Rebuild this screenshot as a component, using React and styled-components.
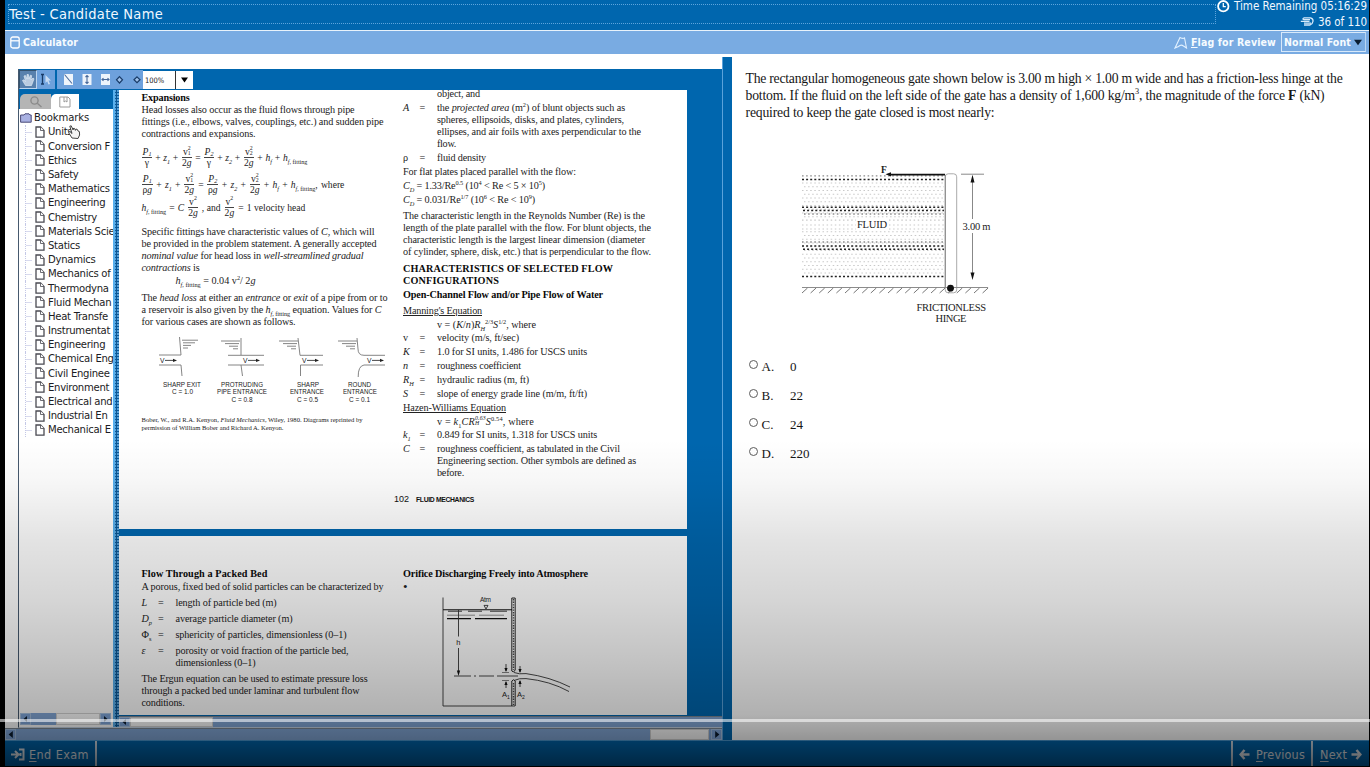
import React, { useLayoutEffect, useRef, useState } from "react";
import styled, { createGlobalStyle, css } from "styled-components";

const UI = `"DejaVu Sans Condensed", "DejaVu Sans", "Noto Sans", sans-serif`;
const SERIF = `"Liberation Serif", serif`;
const BLUE = "#0066ae";

const Global = createGlobalStyle`
  html, body { margin: 0; padding: 0; background: #000; overflow: hidden; }
  * { box-sizing: border-box; }
`;

/* Tracks its text so that it fills a set measure */
const FitSpan = styled.span`
  display: inline-block;
  white-space: nowrap;
  text-decoration: inherit;
  sub, sup { font-size: 0.62em; line-height: 0; }
`;
function Fit({ w, children }) {
  const ref = useRef(null);
  const [ls, setLs] = useState(0);
  useLayoutEffect(() => {
    const el = ref.current;
    const n = el.textContent.length;
    if (w && n) setLs((w - el.getBoundingClientRect().width) / n);
  }, [w]);
  return (
    <FitSpan ref={ref} style={{ letterSpacing: `${ls}px` }}>
      {children}
    </FitSpan>
  );
}

const Screen = styled.div`
  position: relative;
  width: 1370px;
  height: 767px;
  padding: 0 1px 1px 5px;
  background: #000;
  display: flex;
  flex-direction: column;
  overflow: hidden;
  font-family: ${UI};
`;
const Header = styled.header`
  height: 31px;
  flex: none;
  background: ${BLUE};
  border-bottom: 1px solid #e8f2fb;
  display: flex;
  color: #f1f8ff;
`;
const Title = styled.div`
  margin: 4px 0 0 3px;
  width: 1208px;
  height: 20px;
  border: 1px dotted #5da4dc;
  font-size: 14.5px;
  line-height: 19px;
`;
const Status = styled.div`
  flex: 1;
  padding-right: 2px;
  display: flex;
  flex-direction: column;
  align-items: flex-end;
  font-size: 11.5px;
`;
const StatusRow = styled.div`
  height: 15px;
  line-height: 14px;
  margin-top: ${(p) => (p.$first ? "-1px" : "1px")};
  display: flex;
  gap: 4px;
`;
const ToolStrip = styled.div`
  height: 23px;
  flex: none;
  background: #79abe2;
  display: flex;
  align-items: center;
  color: #f6fbff;
  font-size: 10.5px;
  font-weight: bold;
  padding: 0 3px 1px 5px;
`;
const Tool = styled.div`
  display: flex;
  align-items: center;
  gap: 3px;
  u { text-underline-offset: 1px; }
`;
const Spacer = styled.div`
  flex: 1;
`;
const FontSelect = styled.div`
  margin-left: 5px;
  height: 20px;
  width: 85px;
  border: 1px solid #d8e9fa;
  border-right-color: #b7d4f2;
  display: flex;
  align-items: center;
  justify-content: space-between;
  padding: 0 3px 0 2px;
`;
const Main = styled.main`
  flex: 1;
  min-height: 0;
  display: flex;
  background: #fff;
`;
const LeftPane = styled.section`
  width: 717px;
  display: flex;
  flex-direction: column;
`;
const Divider = styled.div`
  width: 10px;
  margin-top: 3px;
  background: ${BLUE};
  border-left: 1px solid #5aa2da;
`;
const Viewer = styled.div`
  margin: 15px 0 0 13px;
  height: 659px;
  border-left: 1px solid #46596e;
  border-bottom: 1px solid #c9d8e8;
  background: ${BLUE};
  display: flex;
  flex-direction: column;
`;
const ViewerBar = styled.div`
  height: 21px;
  flex: none;
  display: flex;
  align-items: center;
`;
const BarGroup = styled.div`
  height: 19px;
  width: ${(p) => p.$w}px;
  margin-right: 2px;
  background: #6ea1dc;
  display: flex;
  svg { display: block; }
`;
const BarButton = styled.div`
  width: 18px;
  height: 19px;
  background: ${(p) => (p.$on ? "#5981ad" : "transparent")};
  border: 1px solid ${(p) => (p.$on ? "#bcd4ee" : "transparent")};
  border-top-color: ${(p) => (p.$on ? "#35536f" : "transparent")};
  border-left-color: ${(p) => (p.$on ? "#35536f" : "transparent")};
`;
const ZoomBox = styled.div`
  width: 33px;
  height: 18px;
  background: #fff;
  border-right: 1px solid #333;
  font-size: 7.5px;
  line-height: 19px;
  padding-left: 2px;
  margin-left: -2px;
  color: #222;
`;
const ZoomDrop = styled.div`
  width: 17px;
  height: 18px;
  background: #fff;
  display: flex;
  align-items: center;
  justify-content: center;
`;
const ViewerBody = styled.div`
  flex: 1;
  min-height: 0;
  display: flex;
`;
const Sidebar = styled.aside`
  width: 94px;
  display: flex;
  flex-direction: column;
`;
const Tabs = styled.div`
  height: 19px;
  padding: 4px 0 0 1px;
  display: flex;
`;
const Tab = styled.div`
  width: ${(p) => (p.$on ? 28 : 31)}px;
  height: 15px;
  background: ${(p) => (p.$on ? "#fff" : "#b5b5b5")};
  border-radius: 5px 0 0 0;
  display: flex;
  align-items: center;
  justify-content: center;
`;
const Tree = styled.div`
  position: relative;
  flex: 1;
  min-height: 0;
  background: #fff;
  padding: 1.7px 0 0 1px;
  overflow: hidden;
  color: #1c1c24;
`;
const TreeRow = styled.div`
  display: flex;
  align-items: center;
  height: 14.2px;
  font-size: 11.2px;
  letter-spacing: -0.28px;
  white-space: nowrap;
  gap: ${(p) => (p.$root ? 2 : 3)}px;
  padding-left: ${(p) => (p.$root ? 0 : 5)}px;
  svg { flex: none; }
`;
const Branch = styled.i`
  width: 7px;
  height: 14.2px;
  flex: none;
  border-left: 1px dotted #c4c8e6;
  background: linear-gradient(#d8daee, #d8daee) 0 7px / 7px 1px no-repeat;
`;
const Cursor = styled.svg`
  position: absolute;
  left: 48px;
  top: 14px;
`;
const Scroll = styled.div`
  height: ${(p) => p.$h}px;
  flex: none;
  background: #86a9d6;
  border-top: 1px solid #7d8894;
  display: flex;
  ${(p) =>
    p.$inset &&
    css`
      background: #fff;
      border-top: none;
      padding: 0 2px 2px 1px;
    `}
`;
const Track = styled.div`
  flex: 1;
  background: #83a8d8;
  display: flex;
`;
const Gap = styled.div`
  width: ${(p) => p.$w}px;
`;
const Thumb = styled.div`
  width: ${(p) => p.$w}px;
  height: 100%;
  background: #fff;
  border: 1px solid #d4d4d4;
`;
const Arrow = styled.div`
  width: 11px;
  height: 100%;
  background: #7fa6da;
  border: 1px solid #a9c4e4;
  display: flex;
  align-items: center;
  justify-content: center;
`;
const Splitter = styled.div`
  width: 6px;
  background: radial-gradient(circle at 1px 1px, #5aa4dc 0.7px, transparent 0.9px) 2px 0 / 3px 3px, #0a5796;
  border-left: 2px solid #58b0ee;
`;
const DocColumn = styled.div`
  flex: 1;
  min-width: 0;
  display: flex;
  flex-direction: column;
`;
const Pages = styled.div`
  flex: 1;
  min-height: 0;
  display: flex;
  flex-direction: column;
  gap: 7px;
  overflow: hidden;
  padding-bottom: 1px;
`;
const Page = styled.article`
  width: 568px;
  height: ${(p) => p.$h}px;
  flex: none;
  background: #fff;
  padding-left: 22.5px;
  overflow: hidden;
  display: grid;
  grid-template-columns: 261.5px 280px;
  align-content: start;
  font-family: ${SERIF};
  font-size: 10.2px;
  color: #222;
`;
const Column = styled.div`
  padding-top: ${(p) => p.$top}px;
  display: flow-root;
`;
/* pitch: distance from the middle of the previous line to the middle of this one */
const LineBox = styled.div`
  height: 12px;
  line-height: 12px;
  margin-top: ${(p) => p.$pitch - 12}px;
  padding-left: ${(p) => p.$indent || 0}px;
  white-space: nowrap;
  font-weight: ${(p) => (p.$bold ? "bold" : "normal")};
  color: ${(p) => (p.$bold ? "#0a0a0a" : "inherit")};
  font-size: ${(p) => (p.$size ? p.$size + "px" : "inherit")};
  text-decoration: ${(p) => (p.$under ? "underline" : "none")};
`;
const Line = ({ w, pitch = 12, indent, bold, size, under, children }) => (
  <LineBox $pitch={pitch} $indent={indent} $bold={bold} $size={size} $under={under}>
    <Fit w={w}>{children}</Fit>
  </LineBox>
);
const DefRow = styled.div`
  height: 12px;
  line-height: 12px;
  margin-top: ${(p) => p.$pitch - 12}px;
  display: grid;
  grid-template-columns: 16.5px 17.5px auto;
  white-space: nowrap;
  & > span:first-child { font-style: ${(p) => (p.$roman ? "normal" : "italic")}; }
  sub { font-size: 0.62em; line-height: 0; }
`;
const Def = ({ s, w, pitch = 14, roman, children }) => (
  <DefRow $pitch={pitch} $roman={roman}>
    <span>{s}</span>
    <span>=</span>
    <span>
      <Fit w={w}>{children}</Fit>
    </span>
  </DefRow>
);
const Equation = styled.div`
  height: ${(p) => p.$h}px;
  width: ${(p) => p.$w}px;
  display: flex;
  align-items: center;
  justify-content: space-between;
  white-space: nowrap;
  font-size: 9.6px;
  line-height: 11px;
  sub { font-size: 0.64em; line-height: 0; }
`;
const FracBox = styled.span`
  display: inline-flex;
  flex-direction: column;
  align-items: center;
  & > span { line-height: 10px; padding: 0 1px; }
  & > span:first-child { border-bottom: 1px solid #444; }
  sub { vertical-align: -0.5px; }
`;
const Stack = styled.span`
  display: inline-flex;
  flex-direction: column;
  vertical-align: middle;
  font-size: 5.8px;
  line-height: 5px;
  margin-top: -2px;
  & > span { min-height: 5px; }
`;
const Frac = ({ a, b }) => (
  <FracBox>
    <span>{a}</span>
    <span>{b}</span>
  </FracBox>
);
const Drawing = styled.svg`
  display: block;
  overflow: visible;
  margin: ${(p) => p.$m || 0};
`;
const PageFoot = styled.div`
  margin: 14px 0 0 -9px;
  height: 12px;
  line-height: 12px;
  display: flex;
  gap: 7px;
  align-items: baseline;
  font-family: "Liberation Sans", sans-serif;
  font-size: 9px;
  color: #111;
  b { font-size: 6.8px; }
`;
const Question = styled.section`
  flex: 1;
  padding: 16px 0 0 13.5px;
  font-family: ${SERIF};
  font-size: 13.7px;
  color: #161616;
`;
const Sentence = styled.p`
  margin: 0;
  height: 17.2px;
  line-height: 17px;
  white-space: nowrap;
  sup { font-size: 0.6em; line-height: 0; }
`;
const Options = styled.div`
  margin: 23px 0 0 3.5px;
`;
const Option = styled.label`
  display: grid;
  grid-template-columns: 12.5px 28.5px auto;
  height: 29px;
  line-height: 28px;
  font-size: 13px;
`;
const Radio = styled.i`
  width: 9px;
  height: 9px;
  margin-top: 7px;
  border-radius: 50%;
  border: 1.4px solid #5c5c5c;
`;
const Footer = styled.footer`
  height: 26px;
  flex: none;
  background: ${BLUE};
  border-top: 1px solid #4b9bd4;
  display: flex;
  color: #fff;
  font-size: 12.5px;
`;
const FootButton = styled.div`
  width: ${(p) => p.$w}px;
  display: flex;
  align-items: center;
  justify-content: center;
  gap: ${(p) => p.$gap || 4}px;
  padding-top: 1px;
  color: #e9eef3;
  ${(p) => (p.$edge === "right" ? "border-right" : "border-left")}: 2px solid #cfdbe6;
  u { text-underline-offset: 2px; text-decoration-thickness: 1px; }
`;
const Shade = styled.div`
  position: absolute;
  left: 0;
  right: 0;
  top: 440px;
  bottom: 0;
  pointer-events: none;
  background: linear-gradient(
    rgba(0, 0, 0, 0) 0,
    rgba(0, 0, 0, 0.03) 40px,
    rgba(0, 0, 0, 0.11) 100px,
    rgba(0, 0, 0, 0.165) 160px,
    rgba(0, 0, 0, 0.235) 220px,
    rgba(0, 0, 0, 0.31) 275px,
    rgba(0, 0, 0, 0.42) 300px,
    rgba(0, 0, 0, 0.62) 327px
  );
`;
const Progress = styled.div`
  position: absolute;
  left: 0;
  right: 0;
  top: 719px;
  height: 3px;
  background: rgba(255, 255, 255, 0.56);
`;

const Tri = ({ dir, s = 5, c = "#0a1c30" }) => (
  <svg width={s} height={s + 1} viewBox="0 0 10 10" preserveAspectRatio="none">
    <path d={{ left: "M8 0L1 5L8 10Z", right: "M2 0L9 5L2 10Z", down: "M0 2L10 2L5 8Z" }[dir]} fill={c} />
  </svg>
);

const SECTIONS = [
  "Units", "Conversion F", "Ethics", "Safety", "Mathematics", "Engineering", "Chemistry",
  "Materials Scie", "Statics", "Dynamics", "Mechanics of", "Thermodyna", "Fluid Mechan",
  "Heat Transfe", "Instrumentat", "Engineering", "Chemical Eng", "Civil Enginee",
  "Environment", "Electrical and", "Industrial En", "Mechanical E",
];

const Doc = () => (
  <svg width="10" height="12" viewBox="0 0 10 12" fill="#fff" stroke="#4a4a52" strokeWidth="1.3">
    <path d="M1 1H5.5L9 4.5V11.2H1Z" />
    <path d="M5.5 1V4.5H9" strokeWidth=".8" />
  </svg>
);

function Entrances() {
  const T = ({ x, y, w, children }) => (
    <text x={x} y={y} textLength={w} lengthAdjust="spacingAndGlyphs" stroke="none" fill="#222">
      {children}
    </text>
  );
  const flow = (x) => (
    <g stroke="#333">
      <T x={x} y={362.6} w={4.5}>V</T>
      <path d={`M${x + 5} 360.4H${x + 13}`} />
      <path d={`M${x + 13} 358.8L${x + 17} 360.4L${x + 13} 362Z`} fill="#222" stroke="none" />
    </g>
  );
  const level = (x) => <path d={`M${x} 341h19M${x + 4} 343.6h14M${x + 8} 346.2h9M${x + 12} 348.8h5`} />;
  return (
    <Drawing width="246" height="74" viewBox="142 332 246 74" $m="4px 0 0" fill="none" stroke="#777" strokeWidth=".9"
      fontFamily="Liberation Sans, sans-serif" fontSize="6.8">
      <path d="M179.5 337L181 355H159M159 365H181L182 376M182 340.2h16M183 342.8h12M183 345.4h8M183 348h5" />
      {flow(160)}
      <path d="M241 338V355M228 355.3H264M228 365H264M241 365L242.5 376" />
      {level(221)}{flow(243)}
      <path d="M298 338L300 355.3H323M323 365H300.5V376" />
      {level(279)}{flow(302)}
      <path d="M357 338L358 349Q358 355.3 364 355.3H385M385 365H364Q358 366 358.2 377" />
      {level(338)}{flow(367)}
      <T x={163} y={386.6} w={38}>SHARP EXIT</T>
      <T x={172} y={394.4} w={21}>C = 1.0</T>
      <T x={221} y={386.6} w={42}>PROTRUDING</T>
      <T x={217} y={394.4} w={50}>PIPE ENTRANCE</T>
      <T x={231.5} y={402.2} w={21}>C = 0.8</T>
      <T x={297} y={386.6} w={22}>SHARP</T>
      <T x={290} y={394.4} w={34}>ENTRANCE</T>
      <T x={297} y={402.2} w={21}>C = 0.5</T>
      <T x={348} y={386.6} w={23}>ROUND</T>
      <T x={343} y={394.4} w={34}>ENTRANCE</T>
      <T x={349} y={402.2} w={21}>C = 0.1</T>
    </Drawing>
  );
}

function Orifice() {
  return (
    <Drawing width="130" height="112" viewBox="442 596 130 112" $m="3px 0 0 39px" fill="none" stroke="#333" strokeWidth=".9"
      fontFamily="Liberation Sans, sans-serif" fontSize="7.5">
      <path d="M443 597.5V706H515" />
      <path d="M443 609.8H512" stroke="#111" strokeWidth="1.1" />
      <path d="M448 611.2h14M468 611.2h14M490 611.2h17" stroke="#222" />
      <path d="M447 615.2h28M479 615.2h25" stroke="#888" />
      <path d="M447 618.6h24M475 618.6h32" stroke="#111" strokeWidth="1.1" />
      <path d="M511.8 706V681Q513.5 678.5 515.2 681V706M511.8 598H515.2V670Q513.5 673.5 511.8 671Z" stroke="#111" />
      <path d="M513.5 599V670M513.5 683V705" stroke="#444" strokeWidth="1.4" strokeDasharray="1.4 1.2" />
      <path d="M484 605.4H488L486 609Z" />
      <path d="M458.5 610V636.5M458.5 648V671" />
      <path d="M456.9 670.5H460.1L458.5 676Z" fill="#111" stroke="none" />
      <path d="M454 676H471M474 676H476M479 676H494M497 676H518" />
      <path d="M502 672.5h7M502 680.5h7" stroke="#777" />
      <path d="M506 664v7M520 666v6M506 682v6M520 681v6" />
      <path d="M504.4 668h3.2l-1.6 4zM518.4 669h3.2l-1.6 4zM504.4 685h3.2l-1.6-4zM518.4 684h3.2l-1.6-4z" fill="#111" stroke="none" />
      <path d="M514 672.5Q519 674.5 526 673.6Q550 677 570 687M514 680.5Q519 678 526 678.6Q550 681 569 691.5" />
      <g fill="#222" stroke="none">
        <text x="480" y="601.5" textLength="11" fontSize="6.5">Atm</text>
        <text x="456.3" y="645.3">h</text>
        <text x="502" y="697">A<tspan fontSize="5" dy="1.5">1</tspan></text>
        <text x="517" y="697">A<tspan fontSize="5" dy="1.5">2</tspan></text>
      </g>
    </Drawing>
  );
}

function Gate() {
  const faint = [];
  for (let y = 183; y < 275; y += 3.75) if (Math.abs(y - 224) > 5) faint.push(y);
  const hatch = Array.from({ length: 22 }, (_, i) => 802 + i * 8.6).filter((x) => x < 984);
  return (
    <Drawing width="190" height="170" viewBox="801 160 190 170" $m="38.4px 0 0 55.5px" fill="none" fontFamily="Liberation Serif, serif" fontSize="10.5">
      {faint.map((y, i) => (
        <path key={y} d={`M${802 + (i % 2) * 2} ${y}H944`} stroke="#c9c9c9" strokeWidth="1.2" strokeDasharray="1.5 2.6" />
      ))}
      <path d="M802 220.2H856M889 220.2H944M802 225H856M889 225H944M802 229H856M889 229H944" stroke="#c9c9c9" strokeWidth="1.2" strokeDasharray="1.5 2.6" />
      <path d="M802 175.8H944M804 214H944M802 242H944" stroke="#8a8a8a" strokeWidth="1.3" strokeDasharray="1.6 2.5" />
      <path d="M802 179.6H944M802 207.3H944M803 210.6H944M802 246H944M803 249.2H944M802 276.6H944" stroke="#222" strokeWidth="1.5" strokeDasharray="2 2.1" />
      <rect x="945.2" y="173.8" width="11.5" height="119" rx="3" fill="#fff" stroke="#aaa" strokeWidth="1" />
      <path d="M945.3 175V287" stroke="#888" />
      <path d="M889 174.6H945" stroke="#111" strokeWidth="1.8" />
      <path d="M885.5 174.3L891 172.3V176.5Z" fill="#111" />
      <path d="M802 287.5H988" stroke="#8c8c8c" />
      {hatch.map((x) => (
        <path key={x} d={`M${x} 293L${x + 5.5} 288`} stroke="#777" />
      ))}
      <circle cx="950.5" cy="288.2" r="3.4" fill="#111" />
      <path d="M961 174.2H984M972.5 179V219M972.5 233V275" stroke="#888" />
      <path d="M970.5 182.5L972.5 174.8L974.5 182.5ZM970.5 272.5L972.5 280L974.5 272.5Z" fill="#111" />
      <g fill="#222">
        <text x="881" y="172.8" fontWeight="bold" fontSize="9.5">F</text>
        <text x="857" y="228.3" textLength="30">FLUID</text>
        <text x="962.5" y="229.5" textLength="28">3.00 m</text>
        <text x="916.5" y="310.8" textLength="69.5">FRICTIONLESS</text>
        <text x="935.5" y="322.3" textLength="31">HINGE</text>
      </g>
    </Drawing>
  );
}

const v2g = (n) => (
  <Frac a={<>v<Stack><span>2</span><span>{n}</span></Stack></>} b={<>2<i>g</i></>} />
);
const Bernoulli = ({ w, h, under, tail }) => (
  <Equation $w={w} $h={h}>
    <Frac a={<i>P<sub>1</sub></i>} b={under} />
    <span>+</span><i>z<sub>1</sub></i><span>+</span>{v2g(1)}<span>=</span>
    <Frac a={<i>P<sub>2</sub></i>} b={under} />
    <span>+</span><i>z<sub>2</sub></i><span>+</span>{v2g(2)}<span>+</span>
    <i>h<sub>f</sub></i><span>+</span>{tail}
  </Equation>
);
const hfit = <><i>h<sub>f, </sub></i><sub>fitting</sub></>;

function PageOne() {
  return (
    <Page $h={439}>
      <Column $top={2}>
        <Line bold w={48}>Expansions</Line>
        <Line w={213}>Head losses also occur as the fluid flows through pipe</Line>
        <Line w={242}>fittings (i.e., elbows, valves, couplings, etc.) and sudden pipe</Line>
        <Line w={114}>contractions and expansions.</Line>
        <Bernoulli w={166} h={34} under="γ" tail={<span>{hfit}</span>} />
        <Bernoulli w={203} h={20} under={<>ρ<i>g</i></>} tail={<><span>{hfit},</span><span>where</span></>} />
        <Equation $w={164} $h={26}>
          <span>{hfit}</span><span>=</span><i>C</i>{v2g("")}<span>, and</span>{v2g("")}<span>=</span><span>1 velocity head</span>
        </Equation>
        <Line w={233} pitch={18}>Specific fittings have characteristic values of <i>C</i>, which will</Line>
        <Line w={235}>be provided in the problem statement. A generally accepted</Line>
        <Line w={222}><i>nominal value</i> for head loss in <i>well-streamlined gradual</i></Line>
        <Line w={58}><i>contractions</i> is</Line>
        <Line w={80} pitch={13} indent={34}>{hfit} = 0.04 v<sup>2</sup>/ 2<i>g</i></Line>
        <Line w={246} pitch={17}>The <i>head loss</i> at either an <i>entrance</i> or <i>exit</i> of a pipe from or to</Line>
        <Line w={240}>a reservoir is also given by the {hfit} equation. Values for <i>C</i></Line>
        <Line w={154}>for various cases are shown as follows.</Line>
        <Entrances />
        <Line w={221} size={6.6} pitch={20}>Bober, W., and R.A. Kenyon, <i>Fluid Mechanics</i>, Wiley, 1980. Diagrams reprinted by</Line>
        <Line w={142} size={6.6} pitch={8}>permission of William Bober and Richard A. Kenyon.</Line>
      </Column>
      <Column $top={-2}>
        <Line w={43} indent={34} pitch={10}>object, and</Line>
        <Def s="A" w={188}>the <i>projected area</i> (m<sup>2</sup>) of blunt objects such as</Def>
        <Line w={187} indent={34}>spheres, ellipsoids, disks, and plates, cylinders,</Line>
        <Line w={204} indent={34}>ellipses, and air foils with axes perpendicular to the</Line>
        <Line w={19} indent={34}>flow.</Line>
        <Def s="ρ" w={49} roman>fluid density</Def>
        <Line w={173} pitch={14}>For flat plates placed parallel with the flow:</Line>
        <Line w={142} pitch={14}><i>C<sub>D</sub></i> = 1.33/Re<sup>0.5</sup> (10<sup>4</sup> &lt; Re &lt; 5 × 10<sup>5</sup>)</Line>
        <Line w={132} pitch={14}><i>C<sub>D</sub></i> = 0.031/Re<sup>1/7</sup> (10<sup>6</sup> &lt; Re &lt; 10<sup>9</sup>)</Line>
        <Line w={242} pitch={16}>The characteristic length in the Reynolds Number (Re) is the</Line>
        <Line w={248}>length of the plate parallel with the flow. For blunt objects, the</Line>
        <Line w={242}>characteristic length is the largest linear dimension (diameter</Line>
        <Line w={248}>of cylinder, sphere, disk, etc.) that is perpendicular to the flow.</Line>
        <Line bold w={210} pitch={16.5}>CHARACTERISTICS OF SELECTED FLOW</Line>
        <Line bold w={96} pitch={12.5}>CONFIGURATIONS</Line>
        <Line bold w={200} pitch={14}>Open-Channel Flow and/or Pipe Flow of Water</Line>
        <Line under w={79} pitch={16}>Manning's Equation</Line>
        <Line w={99} indent={34} pitch={13.5}>v = (<i>K</i>/<i>n</i>)<i>R<sub>H</sub></i><sup>2/3</sup><i>S</i><sup>1/2</sup>, where</Line>
        <Def s="v" roman w={82} pitch={13.5}>velocity (m/s, ft/sec)</Def>
        <Def s="K" w={150}>1.0 for SI units, 1.486 for USCS units</Def>
        <Def s="n" w={84}>roughness coefficient</Def>
        <Def s={<>R<sub>H</sub></>} w={92}>hydraulic radius (m, ft)</Def>
        <Def s="S" w={150}>slope of energy grade line (m/m, ft/ft)</Def>
        <Line under w={103} pitch={14}>Hazen-Williams Equation</Line>
        <Line w={97} indent={34} pitch={13.5}>v = <i>k</i><sub>1</sub><i>CR<Stack><span>0.63</span><span>H</span></Stack>S</i><sup>0.54</sup>, where</Line>
        <Def s={<>k<sub>1</sub></>} w={160} pitch={13}>0.849 for SI units, 1.318 for USCS units</Def>
        <Def s="C" w={183}>roughness coefficient, as tabulated in the Civil</Def>
        <Line w={199} indent={34}>Engineering section. Other symbols are defined as</Line>
        <Line w={27} indent={34}>before.</Line>
        <PageFoot><span>102</span><b><Fit w={58}>FLUID MECHANICS</Fit></b></PageFoot>
      </Column>
    </Page>
  );
}

function PageTwo() {
  return (
    <Page $h={179}>
      <Column $top={32}>
        <Line bold w={126}>Flow Through a Packed Bed</Line>
        <Line w={242} pitch={12.5}>A porous, fixed bed of solid particles can be characterized by</Line>
        <Def s="L" w={101} pitch={16}>length of particle bed (m)</Def>
        <Def s={<>D<sub>p</sub></>} w={117} pitch={16.2}>average particle diameter (m)</Def>
        <Def s={<>Φ<sub>s</sub></>} roman w={171} pitch={16.2}>sphericity of particles, dimensionless (0–1)</Def>
        <Def s="ε" w={173} pitch={16}>porosity or void fraction of the particle bed,</Def>
        <Line w={80} indent={34}>dimensionless (0–1)</Line>
        <Line w={226} pitch={16.2}>The Ergun equation can be used to estimate pressure loss</Line>
        <Line w={218}>through a packed bed under laminar and turbulent flow</Line>
        <Line w={43}>conditions.</Line>
      </Column>
      <Column $top={32}>
        <Line bold w={185}>Orifice Discharging Freely into Atmosphere</Line>
        <Line pitch={12.5} size={13}>•</Line>
        <Orifice />
      </Column>
    </Page>
  );
}

export default function App() {
  return (
    <Screen>
      <Global />
      <Header>
        <Title><Fit w={154}>Test - Candidate Name</Fit></Title>
        <Status>
          <StatusRow $first>
            <svg width="13" height="14" viewBox="0 0 13 14" fill="none" stroke="#fff" strokeWidth="1.8">
              <circle cx="6.3" cy="7.2" r="5.2" /><path d="M6.3 4V7.6H8.8" strokeWidth="1.3" />
            </svg>
            <Fit w={133}>Time Remaining 05:16:29</Fit>
          </StatusRow>
          <StatusRow>
            <svg width="14" height="12" viewBox="0 0 14 12" fill="none" stroke="#d5e9fa" strokeWidth="1.3">
              <path d="M4 2.8H10.5Q13.3 3.6 13 6.2T10 10H4M.8 6.4H9.5M4 2.8Q1.8 4.4 4 4.7H10M4 8.2H11" />
            </svg>
            <Fit w={49}>36 of 110</Fit>
          </StatusRow>
        </Status>
      </Header>
      <ToolStrip>
        <Tool>
          <svg width="10" height="13" viewBox="0 0 10 13" fill="none" stroke="#fff" strokeWidth="1.3">
            <rect x=".8" y="1" width="8.4" height="11" rx="2" /><path d="M1 4.8H9" />
          </svg>
          <Fit w={55}>Calculator</Fit>
        </Tool>
        <Spacer />
        <Tool>
          <svg width="14" height="13" viewBox="0 0 14 13" fill="none" stroke="#e2f1ff" strokeWidth="1.1">
            <path d="M1 12L6 1.5Q9 3 10.5 2L12.5 12L9.5 10Q7 8 4.5 10.5ZM1 12L3 11" />
          </svg>
          <Fit w={85}><u>F</u>lag for Review</Fit>
        </Tool>
        <FontSelect><Fit w={67}>Normal Font</Fit><Tri dir="down" s={8} /></FontSelect>
      </ToolStrip>
      <Main>
        <LeftPane>
          <Viewer>
            <ViewerBar>
              <BarGroup $w={36}>
                <BarButton $on>
                  <svg width="16" height="17" viewBox="0 0 16 17" fill="#b9cbe0" stroke="#dce8f4" strokeWidth=".7">
                    <path d="M5.5 14.5L2.5 9.5L4 8.8L5.6 10.6L4 5L5.4 4.5L7 8L7 3.5H8.4L9 8L10.4 4.2L11.6 4.6L11 9L13 7L14 7.8L11.5 14.5Z" />
                  </svg>
                </BarButton>
                <BarButton>
                  <svg width="16" height="17" viewBox="0 0 16 17">
                    <path d="M3 3.5H6M4.5 3.5V13M3 13H6" stroke="#183a66" strokeWidth="1.3" fill="none" />
                    <path d="M7.5 4L13 9.5H10.5L12 13L10.5 13.5L9.2 10.3L7.5 12Z" fill="#c9dcf3" />
                  </svg>
                </BarButton>
              </BarGroup>
              <BarGroup $w={86}>
                <svg width="86" height="19" viewBox="0 0 86 19">
                  <g fill="#eef4fb"><rect x="7" y="4" width="9" height="11" /><rect x="25.5" y="4" width="9" height="11" /><rect x="44" y="4" width="9" height="11" /></g>
                  <g fill="none" stroke="#7fa3cf" strokeWidth="1.1">
                    <path d="M7.5 4.5L15 13.5" stroke="#48699a" />
                    <path d="M30 5.5V13.5M28.5 7L30 5.5L31.5 7M28.5 12L30 13.5L31.5 12" stroke="#48699a" />
                    <path d="M45 9.5H52M46.5 8.2L45 9.5L46.5 10.8M50.5 8.2L52 9.5L50.5 10.8" stroke="#48699a" />
                  </g>
                  <g fill="#9cc0ea" stroke="#183a66" strokeWidth="1.2"><path d="M62.5 6.6L65.5 9.8L62.5 13L59.5 9.8Z" /><path d="M80 6.8L83 9.8L80 12.6L77 9.8Z" /></g>
                </svg>
              </BarGroup>
              <ZoomBox><Fit w={19}>100%</Fit></ZoomBox>
              <ZoomDrop><Tri dir="down" s={7} c="#000" /></ZoomDrop>
            </ViewerBar>
            <ViewerBody>
              <Sidebar>
                <Tabs>
                  <Tab>
                    <svg width="14" height="13" viewBox="0 0 14 13" fill="none" stroke="#8b8b8b" strokeWidth="1.4"><circle cx="5.5" cy="5.5" r="3.6" /><path d="M8.3 8.3L12.5 12" /></svg>
                  </Tab>
                  <Tab $on>
                    <svg width="12" height="12" viewBox="0 0 12 12" fill="#fff" stroke="#9a9a9a" strokeWidth="1"><path d="M.8 1H9L11 3V11H.8ZM5 1V6L6.5 5L8 6V1" /></svg>
                  </Tab>
                </Tabs>
                <Tree>
                  <TreeRow $root>
                    <svg width="12" height="10" viewBox="0 0 12 10" fill="#a9b1e2" stroke="#4a4a78" strokeWidth="1"><path d="M.6 2H4L5 .8H9L10 2H11.2V9.2H.6Z" /></svg>
                    <Fit w={55}>Bookmarks</Fit>
                  </TreeRow>
                  {SECTIONS.map((s, i) => (
                    <TreeRow key={i}><Branch /><Doc />{s}</TreeRow>
                  ))}
                  <Cursor width="14" height="17" viewBox="0 0 14 17" fill="#f4f4f4" stroke="#444" strokeWidth="1">
                    <path d="M5 15L1.5 9.5L3 8.6L5 10.5L2.8 3.2L4.2 2.8L6.2 7L6 5.5L7.6 5.4L8.4 7.4L9 6L10.4 6.5L11 8L12.4 8.6L12.6 12L11 15.5Z" />
                  </Cursor>
                </Tree>
                <Scroll $inset $h={14}>
                  <Arrow><Tri dir="left" /></Arrow>
                  <Track><Gap $w={25} /><Thumb $w={44} /></Track>
                  <Arrow><Tri dir="right" /></Arrow>
                </Scroll>
              </Sidebar>
              <Splitter />
              <DocColumn>
                <Pages><PageOne /><PageTwo /></Pages>
                <Scroll $h={11}>
                  <Arrow><Tri dir="left" /></Arrow>
                  <Track><Thumb $w={83} /></Track>
                </Scroll>
              </DocColumn>
            </ViewerBody>
          </Viewer>
          <Scroll $h={12}>
            <Arrow><Tri dir="left" s={6} /></Arrow>
            <Track><Gap $w={634} /><Thumb $w={59} /></Track>
            <Arrow><Tri dir="right" s={6} /></Arrow>
          </Scroll>
        </LeftPane>
        <Divider />
        <Question>
          <Sentence><Fit w={597}>The rectangular homogeneous gate shown below is 3.00 m high × 1.00 m wide and has a friction-less hinge at the</Fit></Sentence>
          <Sentence><Fit w={579}>bottom. If the fluid on the left side of the gate has a density of 1,600 kg/m<sup>3</sup>, the magnitude of the force <b>F</b> (kN)</Fit></Sentence>
          <Sentence><Fit w={249}>required to keep the gate closed is most nearly:</Fit></Sentence>
          <Gate />
          <Options>
            {[["A.", "0"], ["B.", "22"], ["C.", "24"], ["D.", "220"]].map(([k, v]) => (
              <Option key={k}><Radio /><span>{k}</span><span>{v}</span></Option>
            ))}
          </Options>
        </Question>
      </Main>
      <Footer>
        <FootButton $w={92} $edge="right">
          <svg width="14" height="13" viewBox="0 0 14 13" fill="none" stroke="#e9eef3" strokeWidth="2">
            <path d="M0 6.5H7M4 3L7.5 6.5L4 10M8 1.5H12.5V11.5H8M9.5 5V8" />
          </svg>
          <Fit w={60}><u>E</u>nd Exam</Fit>
        </FootButton>
        <Spacer />
        <FootButton $w={80} $gap={6}>
          <svg width="11" height="11" viewBox="0 0 11 11" fill="none" stroke="#e9eef3" strokeWidth="2.4"><path d="M10.5 5.5H1.8M5.5 1L1.6 5.5L5.5 10" /></svg>
          <Fit w={49}><u>P</u>revious</Fit>
        </FootButton>
        <FootButton $w={58}>
          <Fit w={27}><u>N</u>ext</Fit>
          <svg width="11" height="11" viewBox="0 0 11 11" fill="none" stroke="#e9eef3" strokeWidth="2.4"><path d="M.5 5.5H9.2M5.5 1L9.4 5.5L5.5 10" /></svg>
        </FootButton>
      </Footer>
      <Shade />
      <Progress />
    </Screen>
  );
}
